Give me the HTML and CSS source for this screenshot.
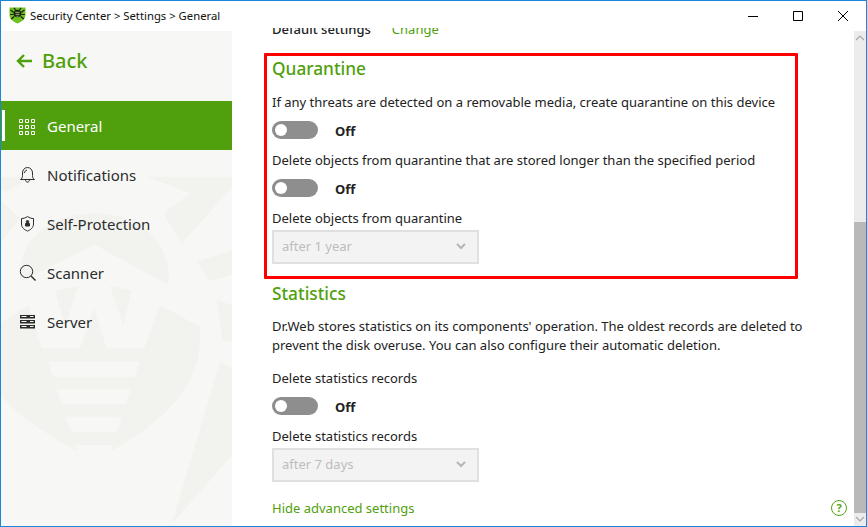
FILE: index.html
```html
<!DOCTYPE html>
<html lang="en">
<head>
  <meta charset="UTF-8" />
  <title>Security Center &gt; Settings &gt; General</title>
  <link rel="stylesheet" href="styles.css">
</head>
<body>

<div class="window">

  <!-- Title bar -->
  <div class="titlebar">
    <svg class="logo" width="17" height="17" viewBox="0 0 17 17">
      <path d="M.5.500h16v7.500c0 4-3.500 6.500-8 8.500-4.500-2-8-4.500-8-8.500z" fill="#6fc21f"/>
      <ellipse cx="8.500" cy="6.500" rx="3.800" ry="3.800" fill="#15200c"/>
      <path d="M6.300 5.300h4.400M6.500 7.300h4M7.500 9.200h2" stroke="#c9e8a0" stroke-width=".8"/>
      <path d="M4.800 5.500 1.500 3M4.700 7.500H1.200M5.200 9.500l-3 2.500M12.200 5.500 15.500 3M12.300 7.500h3.500M11.800 9.500l3 2.500M6.500 3 5 .8M10.500 3 12 .8" stroke="#15200c" stroke-width="1.200" fill="none"/>
    </svg>
    <span class="title-text">Security Center &gt; Settings &gt; General</span>
    <div class="win-buttons">
      <svg width="12" height="12" viewBox="0 0 12 12"><path d="M1 6.500h10" stroke="#000" fill="none"/></svg>
      <svg width="12" height="12" viewBox="0 0 12 12"><path d="M1.500 1.500h9v9h-9z" stroke="#000" fill="none"/></svg>
      <svg width="12" height="12" viewBox="0 0 12 12"><path d="M1 1l10 10M11 1 1 11" stroke="#000" fill="none"/></svg>
    </div>
  </div>

  <div class="app">

    <!-- Sidebar -->
    <div class="sidebar">
      <svg class="watermark" width="231" height="493" viewBox="3 -357 693 1479">
        <g fill="#f2f3ef">
          <path d="M60 395C50 270 150 190 285 190 420 190 520 280 505 405L285 285z"/>
          <path d="M0 520 85 465 125 595H240L282 475 320 595H432L480 465 600 530C610 650 560 780 330 905L338 885H225L232 905C120 840 40 790 0 730z"/>
          <path d="M165 422 235 408 195 530zM330 408 395 420 370 528z"/>
          <path d="M440 80 570 130 490 190 545 282 696 110V80zM0 148 60 205 0 280zM0 80H100L20 125 0 115z"/>
          <path d="M590 335 696 300V375L630 392zM650 450 696 465V575L668 570zM660 635 696 655V915L515 1122z"/>
        </g>
        <path d="M143 635H418L405 680H158zM170 718H392L378 763H185zM198 800H365L350 846H213z" fill="#f7f8f5"/>
      </svg>
      <a class="back">
        <svg width="17" height="16" viewBox="0 0 17 16"><path d="M8 2 2 8l6 6M2 8h14" stroke="#509f0c" stroke-width="2.400" fill="none"/></svg>
        <span>Back</span>
      </a>
      <ul class="menu">
        <li class="menu-item active">
          <svg class="grid-icon" width="17" height="17" viewBox="0 0 17 17" fill="none" stroke="currentColor"><path d="M.5 2.500h3v3h-3zM6.500 2.500h3v3h-3zM12.500 2.500h3v3h-3zM.5 8.500h3v3h-3zM6.500 8.500h3v3h-3zM12.500 8.500h3v3h-3zM.5 14.500h3v3h-3zM6.500 14.500h3v3h-3zM12.500 14.500h3v3h-3z"/></svg>
          General
        </li>
        <li class="menu-item">
          <svg width="17" height="17" viewBox="0 0 17 17" fill="none" stroke="currentColor"><path d="M1.500 13.500c1.500-1 2-2 2-4V7c0-3 2-5.500 5-5.500s5 2.500 5 5.500v2.500c0 2 .5 3 2 4zM6.500 13.500c0 3.500 4 3.500 4 0M5.500 7c0-1.500 1-2.500 2.500-3"/></svg>
          Notifications
        </li>
        <li class="menu-item">
          <svg width="17" height="17" viewBox="0 0 17 17" fill="none" stroke="currentColor"><path d="M8.500 1.500c2 1.500 4 2 6 2v5.500c0 3.500-3 6-6 7-3-1-6-3.500-6-7V3.500c2 0 4-.5 6-2z"/><circle cx="8.500" cy="6.800" r="1.300" fill="currentColor"/><path d="M6.500 8.500h4v2.500h-4z" fill="currentColor"/></svg>
          Self-Protection
        </li>
        <li class="menu-item">
          <svg width="17" height="17" viewBox="0 0 17 17" fill="none" stroke="currentColor"><circle cx="7.500" cy="7.500" r="6.200"/><path d="m12 12 4.500 4.500" stroke-width="1.400"/></svg>
          Scanner
        </li>
        <li class="menu-item">
          <svg width="17" height="17" viewBox="0 0 17 17"><path d="M1 2h15v3.500H1zM1 7h15v3.500H1zM1 12h15v3.500H1z" fill="currentColor"/><path d="M2.500 3.500h5M2.500 8.500h5M2.500 13.500h5M11 3.500h3.500M11 8.500h3.500M11 13.500h3.500" stroke="#f7f8f5"/></svg>
          Server
        </li>
      </ul>
    </div>

    <!-- Settings -->
    <div class="content">
      <div class="settings">
        <div class="default-row"><b>Default settings</b><a class="link">Change</a></div>

        <h3 class="section-title first">Quarantine</h3>
        <p class="label">If any threats are detected on a removable media, create quarantine on this device</p>
        <div class="toggle-row"><span class="toggle"></span><b>Off</b></div>
        <p class="label">Delete objects from quarantine that are stored longer than the specified period</p>
        <div class="toggle-row"><span class="toggle"></span><b>Off</b></div>
        <p class="label">Delete objects from quarantine</p>
        <div class="select"><span>after 1 year</span>
          <svg width="10" height="7" viewBox="0 0 10 7"><path d="m1 1 4 4 4-4" stroke="#b5b5b5" stroke-width="2" fill="none"/></svg>
        </div>

        <h3 class="section-title">Statistics</h3>
        <p class="desc">Dr.Web stores statistics on its components' operation. The oldest records are deleted to prevent the disk overuse. You can also configure their automatic deletion.</p>
        <p class="label spaced">Delete statistics records</p>
        <div class="toggle-row"><span class="toggle"></span><b>Off</b></div>
        <p class="label">Delete statistics records</p>
        <div class="select"><span>after 7 days</span>
          <svg width="10" height="7" viewBox="0 0 10 7"><path d="m1 1 4 4 4-4" stroke="#b5b5b5" stroke-width="2" fill="none"/></svg>
        </div>
        <a class="link hide-link">Hide advanced settings</a>
      </div>
    </div>

    <!-- Scrollbar -->
    <div class="scrollbar">
      <svg class="arrow" width="12" height="17" viewBox="0 0 12 17"><path d="m2 9 4-4 4 4" stroke="#a8a8a8" stroke-width="1.200" fill="none"/></svg>
      <div class="track"></div>
      <div class="thumb"></div>
      <svg class="arrow" width="12" height="13" viewBox="0 0 12 13"><path d="m2 4 4 4 4-4" stroke="#a8a8a8" stroke-width="1.200" fill="none"/></svg>
    </div>
  </div>

  <!-- Highlight frame and help button sit over the page -->
  <div class="highlight"></div>
  <div class="help">?</div>
</div>

</body>
</html>
```

FILE: styles.css
```css
* {
  box-sizing: border-box;
}
html, body {
  margin: 0;
  height: 100%;
}
body {
  font-family: "Noto Sans", Arial, sans-serif;
  font-size: 13px;
  color: #222;
  background: white;
}
.window {
  position: relative;
  width: 867px;
  height: 527px;
  border: 1px solid #1a86d9;
  display: flex;
  flex-direction: column;
  overflow: hidden;
}

/* title bar */
.titlebar {
  height: 27px;
  flex: none;
  display: flex;
  align-items: center;
  padding-left: 8px;
  position: relative;
  z-index: 2;
  background: white;
}
.logo {
  margin-top: 2px;
}
.title-text {
  margin-left: 4px;
  margin-top: 2px;
  font-size: 11.3px;
  color: #111;
}
.win-buttons {
  margin-left: auto;
  display: flex;
  gap: 33px;
  padding-right: 17px;
  margin-top: 3px;
}

.app {
  flex: 1;
  display: flex;
  min-height: 0;
}

/* sidebar */
.sidebar {
  position: relative;
  width: 231px;
  margin-top: 3px;
  background: #f7f8f5;
  flex: none;
  overflow: hidden;
}
.watermark {
  position: absolute;
  left: 0;
  top: 0;
}
.back {
  position: relative;
  height: 70px;
  padding: 0 0 11px 15px;
  display: flex;
  align-items: center;
  gap: 9px;
  font-size: 20px;
  font-weight: 500;
  color: #509f0c;
}
.menu {
  position: relative;
  list-style: none;
  margin: 0;
  padding: 0;
}
.menu-item {
  height: 49px;
  display: flex;
  align-items: center;
  gap: 11px;
  padding-left: 18px;
  font-size: 15px;
  color: #2c2c2c;
  position: relative;
}
.menu-item.active {
  background: #509f0c;
  color: white;
}
.menu-item.active::before {
  content: "";
  position: absolute;
  left: 1px;
  top: 9px;
  width: 3px;
  height: 31px;
  background: white;
}
.grid-icon {
  overflow: visible;
}

/* settings column */
.content {
  flex: 1;
  min-width: 0;
  overflow: hidden;
  padding-left: 40px;
}
.settings {
  margin-top: -9px;
}
.default-row {
  height: 20px;
  line-height: 20px;
}
.default-row b {
  font-weight: 500;
  margin-right: 21px;
}
.link {
  color: #509f0c;
}
.section-title {
  margin: 18px 0 0;
  height: 24px;
  line-height: 24px;
  font-size: 17.3px;
  font-weight: 500;
  color: #509f0c;
}
.section-title.first {
  margin-top: 18px;
}
.label {
  margin: 10px 0 0;
  line-height: 20px;
}
.section-title + .label {
  margin-top: 11px;
}
.label.spaced {
  margin-top: 13px;
}
.desc {
  margin: 11px 0 0;
  line-height: 19px;
  width: 540px;
}
.toggle-row {
  margin-top: 8px;
  height: 20px;
  display: flex;
  align-items: center;
  gap: 17px;
}
.toggle-row b {
  font-weight: 700;
  padding-top: 2px;
}
.toggle {
  width: 46px;
  height: 18px;
  border-radius: 9px;
  background: #8e8e8e;
  position: relative;
}
.toggle::before {
  content: "";
  position: absolute;
  left: 3px;
  top: 3px;
  width: 12px;
  height: 12px;
  border-radius: 50%;
  background: white;
}
.select {
  margin-top: 2px;
  width: 207px;
  height: 34px;
  background: #f3f3f3;
  border: 2px solid #e0e0e0;
  display: flex;
  align-items: center;
  justify-content: space-between;
  padding: 0 11px 2px 8px;
  color: #bdbdbd;
}
.hide-link {
  display: block;
  margin-top: 16px;
  line-height: 20px;
}

/* scrollbar */
.scrollbar {
  width: 12px;
  margin-top: 3px;
  flex: none;
  display: flex;
  flex-direction: column;
  background: #ececec;
}
.arrow {
  flex: none;
}
.track {
  height: 174px;
  flex: none;
}
.thumb {
  flex: 1;
  background: #b9b9b9;
}

/* things lying over the page */
.highlight {
  position: absolute;
  left: 263px;
  top: 52px;
  width: 534px;
  height: 226px;
  border: 3px solid #ff0000;
  border-radius: 1px;
}
.help {
  position: absolute;
  left: 830px;
  top: 499px;
  width: 16px;
  height: 16px;
  border: 1.500px solid #55a510;
  border-radius: 50%;
  font-size: 11px;
  font-weight: 700;
  line-height: 13px;
  text-align: center;
  color: #55a510;
}
```
